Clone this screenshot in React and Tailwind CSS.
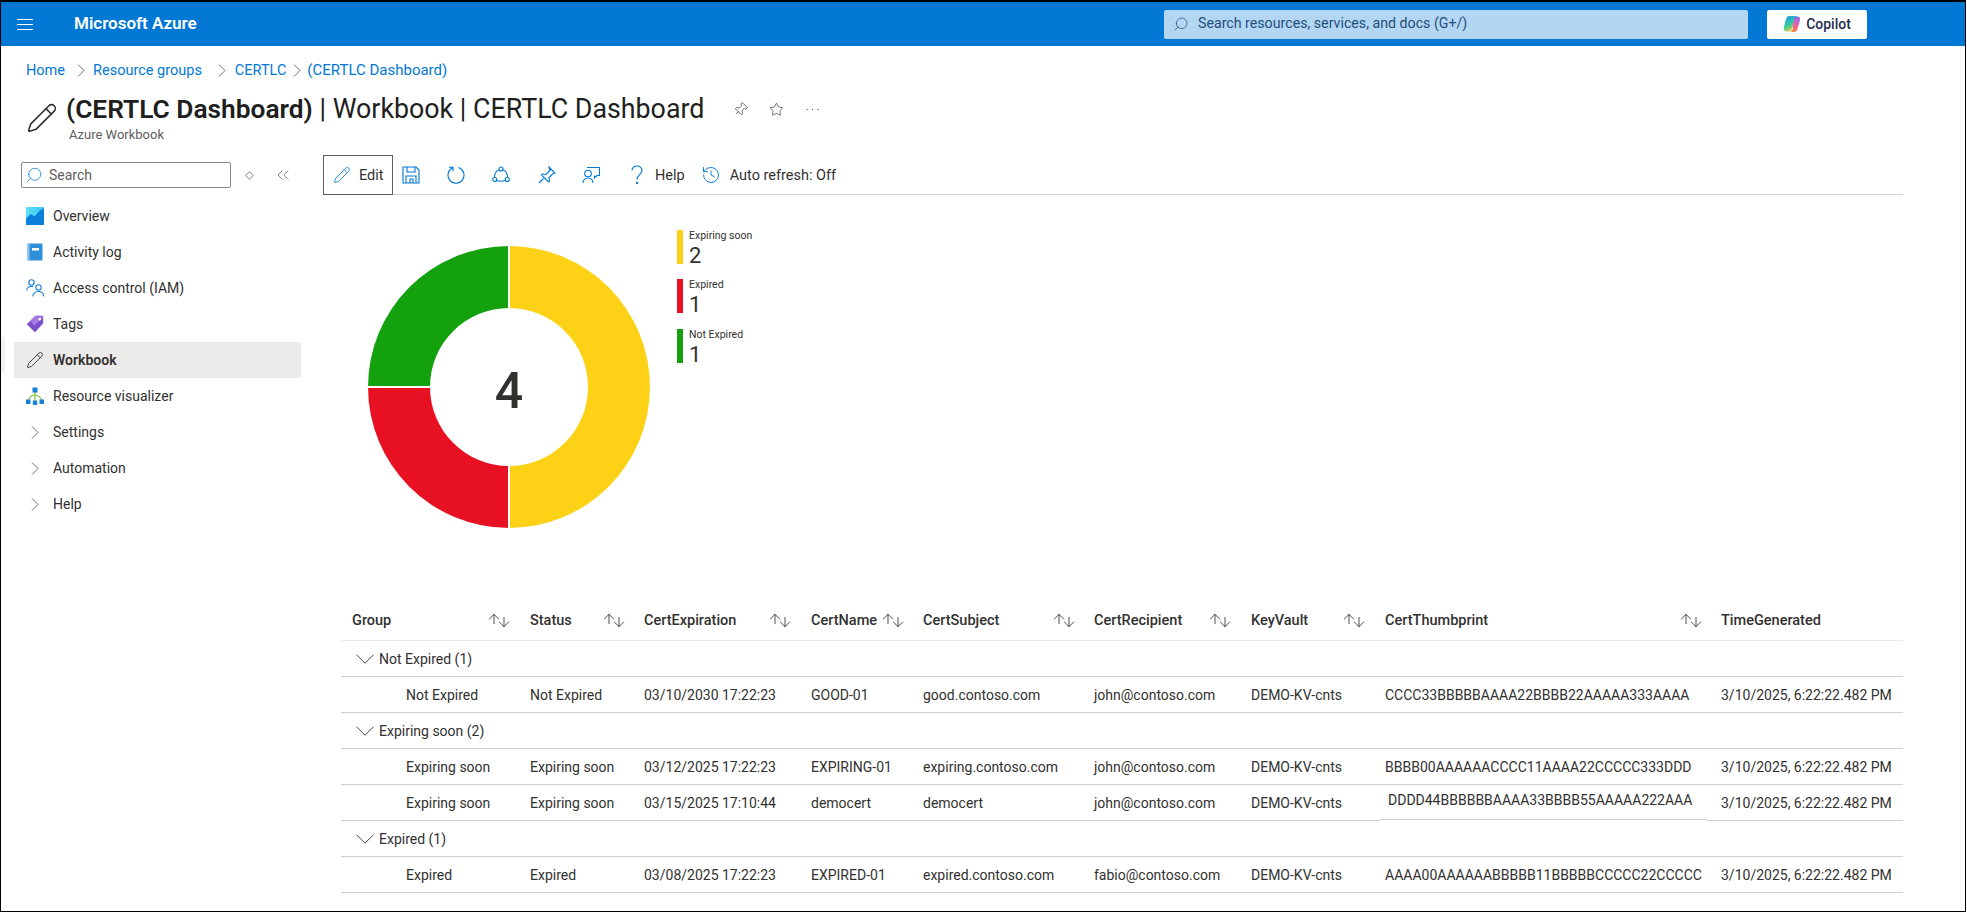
import React from 'react'
import { ChevronsLeft, Search, Pin, Star, Pencil, History, ArrowUp, ArrowDown } from 'lucide-react'

const navItems = [
  { label: 'Overview', icon: 'overview' },
  { label: 'Activity log', icon: 'log' },
  { label: 'Access control (IAM)', icon: 'iam' },
  { label: 'Tags', icon: 'tags' },
  { label: 'Workbook', icon: 'pencil', active: true },
  { label: 'Resource visualizer', icon: 'visualizer' },
  { label: 'Settings', icon: 'chevron' },
  { label: 'Automation', icon: 'chevron' },
  { label: 'Help', icon: 'chevron' },
]

const columns = [
  { label: 'Group', width: 'w-[178px]', pad: 'pl-[11px] pr-[11px]', sort: true },
  { label: 'Status', width: 'w-[114px]', pad: 'pl-[11px] pr-[10px]', sort: true },
  { label: 'CertExpiration', width: 'w-[167px]', pad: 'pl-[11px] pr-[11px]', sort: true },
  { label: 'CertName', width: 'w-[112px]', pad: 'pl-[11px] pr-[10px]', sort: true },
  { label: 'CertSubject', width: 'w-[171px]', pad: 'pl-[11px] pr-[10px]', sort: true },
  { label: 'CertRecipient', width: 'w-[157px]', pad: 'pl-[11px] pr-[11px]', sort: true },
  { label: 'KeyVault', width: 'w-[140px]', pad: 'pl-[11px] pr-[17px]', sort: true },
  { label: 'CertThumbprint', width: 'w-[327px]', pad: 'pl-[5px] pr-[7px]', sort: true },
  { label: 'TimeGenerated', width: 'w-[196px]', pad: 'pl-[14px] pr-[4px]', sort: false },
]

const groups = [
  {
    name: 'Not Expired (1)',
    rows: [['Not Expired', 'Not Expired', '03/10/2030 17:22:23', 'GOOD-01', 'good.contoso.com', 'john@contoso.com', 'DEMO-KV-cnts', 'CCCC33BBBBBAAAA22BBBB22AAAAA333AAAA', '3/10/2025, 6:22:22.482 PM']],
  },
  {
    name: 'Expiring soon (2)',
    rows: [
      ['Expiring soon', 'Expiring soon', '03/12/2025 17:22:23', 'EXPIRING-01', 'expiring.contoso.com', 'john@contoso.com', 'DEMO-KV-cnts', 'BBBB00AAAAAACCCC11AAAA22CCCCC333DDD', '3/10/2025, 6:22:22.482 PM'],
      ['Expiring soon', 'Expiring soon', '03/15/2025 17:10:44', 'democert', 'democert', 'john@contoso.com', 'DEMO-KV-cnts', 'DDDD44BBBBBBAAAA33BBBB55AAAAA222AAA', '3/10/2025, 6:22:22.482 PM'],
    ],
  },
  {
    name: 'Expired (1)',
    rows: [['Expired', 'Expired', '03/08/2025 17:22:23', 'EXPIRED-01', 'expired.contoso.com', 'fabio@contoso.com', 'DEMO-KV-cnts', 'AAAA00AAAAAABBBBB11BBBBBCCCCC22CCCCC', '3/10/2025, 6:22:22.482 PM']],
  },
]

const legend = [
  { label: 'Expiring soon', value: 2, color: 'bg-[#fcd116]' },
  { label: 'Expired', value: 1, color: 'bg-[#e81123]' },
  { label: 'Not Expired', value: 1, color: 'bg-[#13a10e]' },
]

const CopilotIcon = () => (
  <svg width="18" height="18" viewBox="0 0 18 18">
    <defs>
      <linearGradient id="copA" x1="0.2" y1="0" x2="0.6" y2="1">
        <stop offset="0" stopColor="#1f9ce8" />
        <stop offset="0.55" stopColor="#35c9a0" />
        <stop offset="1" stopColor="#f2d33a" />
      </linearGradient>
      <linearGradient id="copB" x1="0.7" y1="0" x2="0.3" y2="1">
        <stop offset="0" stopColor="#8a6cf0" />
        <stop offset="0.5" stopColor="#ee5fa7" />
        <stop offset="1" stopColor="#f58a2c" />
      </linearGradient>
    </defs>
    <path d="M12 1.500h2.500c1.900 0 3 1.600 2.500 3.400l-2.700 9.600c-.5 1.500-1.700 2.500-3.300 2.500H6.500c2-.3 2.800-1.500 3.300-3.100L9 6z" fill="url(#copB)" />
    <path d="M6.200 1c-1.500 0-2.600 1-3 2.400L.8 12.800C.3 14.700 1.500 16.500 3.500 16.500h2.300c1.500 0 2.600-1 3.100-2.500l2.300-9.200c.4-1.500 1.200-3.200 2.800-3.800z" fill="url(#copA)" />
  </svg>
)

const OverviewIcon = () => (
  <svg width="18" height="18" viewBox="0 0 18 18">
    <defs>
      <linearGradient id="ovBg" x1="0" y1="0" x2="1" y2="0">
        <stop offset="0" stopColor="#5ee0f5" />
        <stop offset="1" stopColor="#37c2f0" />
      </linearGradient>
    </defs>
    <rect width="18" height="18" rx="1" fill="url(#ovBg)" />
    <path d="M0 11.500L5 7l3.500 2.500L14 3.500l4-2V18H0z" fill="#0a7fdc" />
  </svg>
)

const LogIcon = () => (
  <svg width="18" height="18" viewBox="0 0 18 18">
    <rect x="1.500" y="0.500" width="15" height="17" rx="1" fill="#2f8fd8" />
    <rect x="1.500" y="0.500" width="2" height="17" fill="#8fc6ef" />
    <rect x="6" y="5" width="7" height="2.500" fill="#fff" />
  </svg>
)

const IamIcon = () => (
  <svg width="18" height="18" viewBox="0 0 18 18" fill="none" stroke="#1a7fd6" strokeWidth="1.1">
    <circle cx="5.500" cy="3.500" r="2.700" />
    <circle cx="12.500" cy="8.500" r="2.700" />
    <path d="M0.700 11.500c0-2.500 2-4 4.800-4 .7 0 1.200.1 1.800.3" />
    <path d="M6.800 17.500c0-3 2.300-5 5.700-5s5 2 5 5" />
  </svg>
)

const TagIcon = () => (
  <svg width="18" height="18" viewBox="0 0 18 18">
    <path d="M9.500 0.800h6.200c.9 0 1.500.6 1.500 1.500v5.900L9 17.200 0.800 9.200z" fill="#7b4fc9" />
    <path d="M9.500 0.800h6.200c.9 0 1.500.6 1.500 1.500L8 11 4.500 5.600z" fill="#a47be0" />
    <circle cx="13.800" cy="4.200" r="1.300" fill="#fff" />
  </svg>
)

const VisualizerIcon = () => (
  <svg width="18" height="18" viewBox="0 0 18 18">
    <path d="M9 5v10M2.500 13C4 9.500 6.500 8 9 8s5 1.500 6.500 5" fill="none" stroke="#7cc43c" strokeWidth="1.2" />
    <rect x="6.500" y="0.500" width="5" height="5" fill="#1a7fd6" />
    <rect x="0" y="12.500" width="4.500" height="4.500" fill="#1a7fd6" />
    <rect x="6.800" y="13.500" width="4.400" height="4.400" fill="#1a7fd6" />
    <rect x="13.500" y="12.500" width="4.500" height="4.500" fill="#1a7fd6" />
  </svg>
)

const Chevron = ({ className = '' }) => (
  <svg width="8" height="13" viewBox="0 0 8 13" fill="none" stroke="#605e5c" strokeWidth="0.9" className={className}>
    <path d="M1 .5L7 6.500 1 12.500" />
  </svg>
)

const NavIcon = ({ name }) => {
  if (name === 'overview') return <OverviewIcon />
  if (name === 'log') return <LogIcon />
  if (name === 'iam') return <IamIcon />
  if (name === 'tags') return <TagIcon />
  if (name === 'visualizer') return <VisualizerIcon />
  if (name === 'pencil') return <Pencil size={18} strokeWidth={1.2} className="text-[#323130]" />
  return <Chevron />
}

// toolbar icons, all blue line drawings on a 18 box
const ToolIcon = ({ children, className = '' }) => (
  <svg width="18" height="18" viewBox="0 0 18 18" fill="none" stroke="#0078d4" strokeWidth="1.1" className={className}>
    {children}
  </svg>
)

const SortIcon = () => (
  <span className="flex items-center text-[#323130] -mr-[4px]">
    <ArrowUp size={16} strokeWidth={1.3} className="-mt-[3px] -mr-[6px]" />
    <ArrowDown size={16} strokeWidth={1.3} className="mt-[3px]" />
  </span>
)

const Donut = () => (
  <svg width="288" height="288" viewBox="-144 -144 288 288">
    <path d="M0 -141A141 141 0 0 1 0 141L0 79A79 79 0 0 0 0 -79Z" fill="#fcd116" />
    <path d="M0 141A141 141 0 0 1 -141 0L-79 0A79 79 0 0 0 0 79Z" fill="#e81123" />
    <path d="M-141 0A141 141 0 0 1 0 -141L0 -79A79 79 0 0 0 -79 0Z" fill="#13a10e" />
    <path d="M0 -142V-78M0 78V142M-142 0H-78" stroke="#fff" strokeWidth="2" />
    <text x="0" y="21" textAnchor="middle" fontSize="50" fontWeight="500" fill="#323130">4</text>
  </svg>
)

const cell = 'h-9 text-[14px] text-[#323130] font-normal text-left border-b border-[#d2d0ce] whitespace-nowrap overflow-hidden'

const DataRow = ({ row }) => (
  <tr>
    {row.map((value, i) => {
      if (i === 0) return <td key={i} className={`${cell} pt-[2px] pl-[65px]`}>{value}</td>
      if (i === 7 && value.startsWith('DDDD')) {
        return (
          <td key={i} className={`${cell} !border-white`}>
            <div className="h-[35px] pl-[8px] border-b border-[#d2d0ce] flex items-center pb-[2px]">{value}</div>
          </td>
        )
      }
      return <td key={i} className={`${cell} pt-[2px] ${columns[i].pad}`}>{value}</td>
    })}
  </tr>
)

export default function App() {
  return (
    <div className="w-[1966px] h-[912px] overflow-hidden bg-white border-t-2 border-l border-b border-r border-black font-['Roboto','Liberation_Sans',sans-serif] text-[#323130] relative">
      {/* Top bar */}
      <header className="h-11 bg-[#0078d4] flex items-center text-white">
        <div className="ml-4 w-4 flex flex-col gap-[4px]">
          <span className="h-px bg-white" />
          <span className="h-px bg-white" />
          <span className="h-px bg-white" />
        </div>
        <div className="ml-[41px] w-[122px] text-[17px] font-semibold whitespace-nowrap">Microsoft Azure</div>
        <div className="ml-[968px] w-[584px] h-[29px] bg-[#b3d7f2] rounded-[2px] flex items-center pl-[9px] gap-[9px] text-[14.2px] text-[#1f4e79]">
          <Search size={16} strokeWidth={1.1} className="-scale-x-100" />
          Search resources, services, and docs (G+/)
        </div>
        <button className="ml-[19px] w-[100px] h-[29px] bg-white rounded-[2px] flex items-center justify-center gap-[5px] text-[14px] font-medium text-[#1f2d4d]">
          <CopilotIcon />
          Copilot
        </button>
      </header>

      {/* Breadcrumb + title */}
      <nav className="h-[25px] mt-3 ml-[25px] flex items-center text-[14.5px] text-[#0078d4]">
        <span>Home</span>
        <Chevron className="ml-[12px]" />
        <span className="ml-[8px]">Resource groups</span>
        <Chevron className="ml-[16px]" />
        <span className="ml-[9px]">CERTLC</span>
        <Chevron className="ml-[7px]" />
        <span className="ml-[6px] text-[15px]">(CERTLC Dashboard)</span>
      </nav>
      <div className="ml-[25px] mt-[8px] flex">
        <Pencil size={32} strokeWidth={1.2} className="mt-[11px] text-[#323130]" />
        <div className="ml-[8px]">
          <div className="flex items-center h-[36px]">
            <h1 className="text-[26.8px] text-[#201f1e] font-normal whitespace-nowrap">
              <span className="font-semibold text-[26.3px]">(CERTLC Dashboard)</span> | Workbook | CERTLC Dashboard
            </h1>
            <Pin size={15} strokeWidth={1.1} className="ml-[29px] rotate-45" />
            <Star size={15} strokeWidth={1.1} className="ml-[21px]" />
            <svg width="13" height="3" viewBox="0 0 13 3" fill="#605e5c" className="ml-[22px]">
              <circle cx="1" cy="1.500" r=".7" />
              <circle cx="6.500" cy="1.500" r=".7" />
              <circle cx="12" cy="1.500" r=".7" />
            </svg>
          </div>
          <div className="ml-[3px] text-[13px] text-[#605e5c] leading-4">Azure Workbook</div>
        </div>
      </div>

      <div className="flex mt-[12px] relative">
        <span className="absolute left-0 top-[182px] w-[4px] h-[36px] bg-[#f3f2f1]" />
        {/* Side menu */}
        <aside className="ml-[13px] w-[287px] shrink-0">
          <div className="flex items-center h-[26px] mt-[7px]">
            <div className="ml-[7px] w-[210px] h-[26px] border border-[#8a8886] rounded-[2px] flex items-center pl-[3px] gap-[6px] text-[14px] text-[#605e5c]">
              <Search size={18} strokeWidth={1} className="-scale-x-100 text-[#0078d4]" />
              Search
            </div>
            <svg width="9" height="9" viewBox="0 0 9 9" fill="none" stroke="#605e5c" strokeWidth="0.8" className="ml-[14px]">
              <path d="M4.500 .7L8.200 4.500 4.500 8.300.8 4.500z" />
            </svg>
            <ChevronsLeft size={20} strokeWidth={0.9} className="ml-[19px] text-[#605e5c]" />
          </div>
          <ul className="mt-[10px]">
            {navItems.map((item) => (
              <li
                key={item.label}
                className={`h-9 flex items-center text-[14px] ${item.active ? 'bg-[#edebe9] font-semibold' : ''}`}
              >
                <span className="ml-[12px] w-[18px] flex justify-center">
                  <NavIcon name={item.icon} />
                </span>
                <span className="ml-[9px]">{item.label}</span>
              </li>
            ))}
          </ul>
        </aside>

        <main className="ml-[22px] w-[1580px] shrink-0">
          {/* Toolbar */}
          <div className="h-10 border-b border-[#d2d0ce] flex items-center text-[14.5px]">
            <button className="h-10 w-[70px] border border-[#605e5c] flex items-center pl-[9px] gap-[8px]">
              <Pencil size={18} strokeWidth={1.1} className="text-[#0078d4]" />
              <span className="mt-[2px]">Edit</span>
            </button>
            <ToolIcon className="ml-[9px]">
              <path d="M1 1h13l3 3v13H1zM5 1v5h8V1M4 17v-7h10v7M8 17v-4h3v4" />
            </ToolIcon>
            <ToolIcon className="ml-[27px]">
              <path d="M6.500 1.600A8 8 0 1 0 11.500 1.600M6 5.200V1.300H2" />
            </ToolIcon>
            <ToolIcon className="ml-[27px]">
              <circle cx="9" cy="3" r="2" />
              <circle cx="2.700" cy="13.500" r="2" />
              <circle cx="15.300" cy="13.500" r="2" />
              <path d="M7.200 3.800C4 5 2.500 8 2.500 11.500M10.800 3.800C14 5 15.500 8 15.500 11.500M4.700 14.500c3 1 5.600 1 8.600 0" />
            </ToolIcon>
            <ToolIcon className="ml-[28px]">
              <path d="M11 1l6 6-2 .5-4 4 .5 3.500-1 1-7-7 1-1 3.500.5 4-4zM5.500 12.500L1 17" />
            </ToolIcon>
            <ToolIcon className="ml-[26px]">
              <circle cx="6" cy="7.500" r="3.300" />
              <path d="M1 17c0-3 2-5 5-5s5 2 5 5M5 1.500h12.500v8h-2.500l-2.500 2.500v-2.500" />
            </ToolIcon>
            <svg width="12" height="20" viewBox="0 0 12 20" fill="none" stroke="#0078d4" strokeWidth="1.1" className="ml-[31px]">
              <path d="M1 5.500C1 3 3 1 6 1s5 2 5 4.500c0 4-5 4.500-5 9" />
              <circle cx="6" cy="18" r=".6" fill="#0078d4" />
            </svg>
            <span className="ml-[12px] mt-[2px]">Help</span>
            <History size={20} strokeWidth={1.1} className="ml-[16px] text-[#0078d4]" />
            <span className="ml-[9px] mt-[2px]">Auto refresh: Off</span>
          </div>

          {/* Donut + legend */}
          <div className="flex h-[409px]">
            <div className="ml-[42px] mt-[48px]">
              <Donut />
            </div>
            <div className="ml-[24px] mt-[35px] flex flex-col gap-[15px]">
              {legend.map((item, i) => (
                <div key={item.label} className={`flex h-[34px] gap-[6px] ${i === 2 ? 'mt-px' : ''}`}>
                  <span className={`w-[6px] h-full ${item.color}`} />
                  <div className="-mt-px">
                    <div className="text-[10.5px] leading-[13px] whitespace-nowrap">{item.label}</div>
                    <div className="text-[22px] leading-[22px] mt-[3px]">{item.value}</div>
                  </div>
                </div>
              ))}
            </div>
          </div>

          {/* Table */}
          <table className="ml-[18px] w-[1562px] table-fixed border-collapse">
            <thead>
              <tr>
                {columns.map((col) => (
                  <th key={col.label} className={`${col.width} ${col.pad} h-9 pb-[2px] text-[14.5px] font-medium text-left border-b border-[#edebe9]`}>
                    <div className="flex items-center justify-between whitespace-nowrap">
                      <span>{col.label}</span>
                      {col.sort && <SortIcon />}
                    </div>
                  </th>
                ))}
              </tr>
            </thead>
            <tbody>
              {groups.map((group) => (
                <React.Fragment key={group.name}>
                  <tr>
                    <td colSpan={9} className="h-9 pt-[2px] border-b border-[#d2d0ce] text-[14px]">
                      <div className="flex items-center pl-[15px] gap-[5px]">
                        <svg width="18" height="10" viewBox="0 0 18 10" fill="none" stroke="#323130" strokeWidth="0.9">
                          <path d="M.5 .7L9 9.200 17.500 .7" />
                        </svg>
                        {group.name}
                      </div>
                    </td>
                  </tr>
                  {group.rows.map((row) => (
                    <DataRow key={row[3]} row={row} />
                  ))}
                </React.Fragment>
              ))}
            </tbody>
          </table>
        </main>
      </div>
    </div>
  )
}
